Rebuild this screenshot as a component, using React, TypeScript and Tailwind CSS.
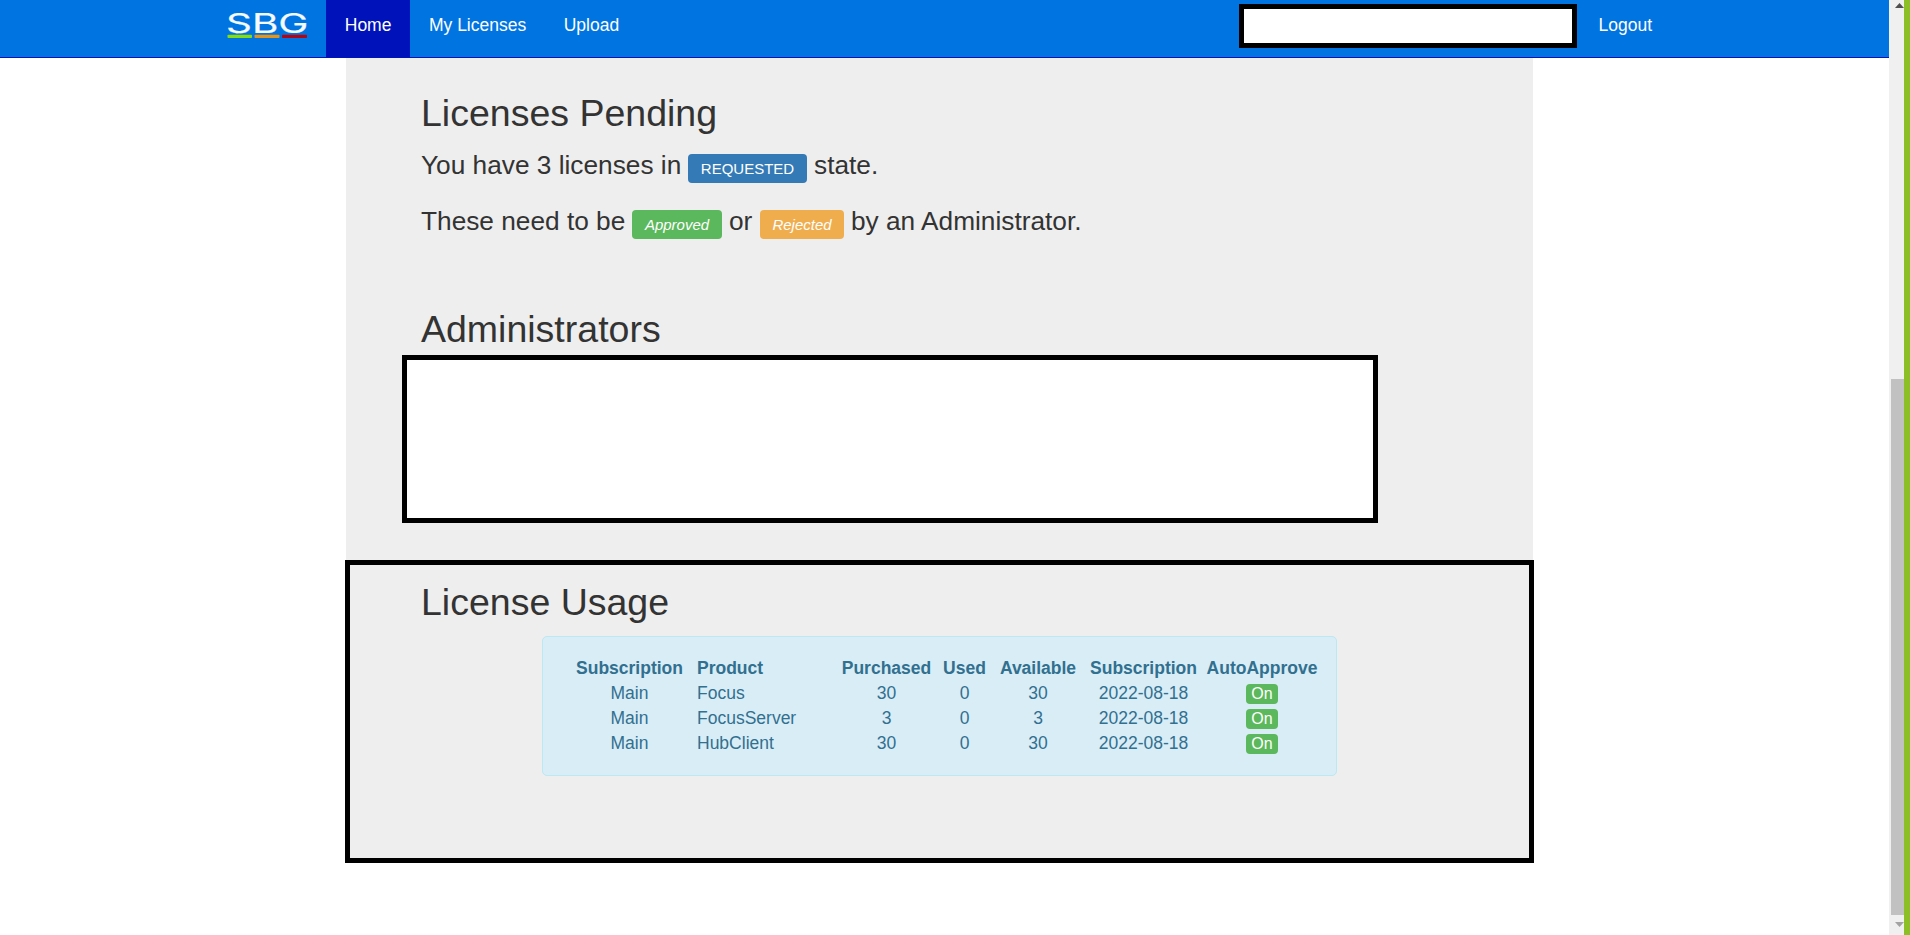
import React from "react";

const links = [
  { name: "Home", active: true },
  { name: "My Licenses", active: false },
  { name: "Upload", active: false },
];

const licenses = [
  { subscription: "Main", product: "Focus", purchased: 30, used: 0, available: 30, expires: "2022-08-18" },
  { subscription: "Main", product: "FocusServer", purchased: 3, used: 0, available: 3, expires: "2022-08-18" },
  { subscription: "Main", product: "HubClient", purchased: 30, used: 0, available: 30, expires: "2022-08-18" },
];

const Logo = () => (
  <svg
    width="81"
    height="28"
    viewBox="0 0 81 28"
    className="mt-3 mr-[18px] ml-[227px] shrink-0 overflow-visible"
  >
    <text
      x="-1"
      y="20.5"
      fill="#f4faff"
      stroke="#f4faff"
      strokeWidth="0.2"
      fontFamily="Inter, sans-serif"
      fontSize="27"
      fontWeight="400"
      textLength="82.5"
      lengthAdjust="spacingAndGlyphs"
    >
      SBG
    </text>
    <rect x="0.5" y="22.8" width="24.5" height="3.2" rx="0.8" fill="#86dc0c" />
    <rect x="27.5" y="22.8" width="25" height="3.2" rx="0.8" fill="#e5941a" />
    <rect x="55" y="22.8" width="25" height="3.2" rx="0.8" fill="#b00614" />
  </svg>
);

const Navbar = () => (
  <nav className="flex h-[58px] shrink-0 border-b border-[#0013ba] bg-[#0074e1] text-[17.5px] leading-6 text-white">
    <Logo />
    {links.map((link) => (
      <a
        key={link.name}
        className={
          link.active
            ? "bg-[#0013ba] px-[18.75px] pt-[13px]"
            : "px-[18.75px] pt-[13px]"
        }
      >
        {link.name}
      </a>
    ))}
    <div className="mt-1 mr-[21px] ml-auto h-11 w-[338px] border-5 border-black bg-white" />
    <a className="mr-[235px] w-[56px] pt-[13px] pl-[0.5px]">Logout</a>
  </nav>
);

const Scrollbar = () => (
  <div className="flex w-[15px] shrink-0 flex-col items-end bg-[#f0f0f0]">
    <svg width="9" height="5" viewBox="0 0 9 5" className="mt-[3px] shrink-0">
      <path d="M4.5 0 9 5H0z" fill="#505050" />
    </svg>
    <div className="mt-[371px] h-[536px] w-[13px] bg-[#c1c1c1]" />
    <svg width="9" height="5" viewBox="0 0 9 5" className="mt-[7px] shrink-0">
      <path d="M0 0h9L4.5 5z" fill="#a3a3a3" />
    </svg>
  </div>
);

const UsageTable = () => (
  <div className="mt-[13px] ml-[192px] h-[140px] w-[795px] rounded-[5px] border border-[#bce8f1] bg-[#d9edf7] pt-[19px] pl-[26px] text-[#31708f]">
    <table className="w-[755px] table-fixed text-center text-[17.5px] leading-[25px]">
      <colgroup>
        <col className="w-[121px]" />
        <col className="w-[143px]" />
        <col className="w-[107px]" />
        <col className="w-[49px]" />
        <col className="w-[98px]" />
        <col className="w-[113px]" />
        <col className="w-[124px]" />
      </colgroup>
      <thead>
        <tr className="h-[25px]">
          <th className="p-0">Subscription</th>
          <th className="p-0 pl-[7px] text-left">Product</th>
          <th className="p-0">Purchased</th>
          <th className="p-0">Used</th>
          <th className="p-0">Available</th>
          <th className="p-0">Subscription</th>
          <th className="p-0">AutoApprove</th>
        </tr>
      </thead>
      <tbody>
        {licenses.map((license) => (
          <tr key={license.product} className="h-[25px]">
            <td className="p-0">{license.subscription}</td>
            <td className="p-0 pl-[7px] text-left">{license.product}</td>
            <td className="p-0">{license.purchased}</td>
            <td className="p-0">{license.used}</td>
            <td className="p-0">{license.available}</td>
            <td className="p-0">{license.expires}</td>
            <td className="p-0">
              <span className="mx-auto block h-5 w-8 rounded-[4px] bg-[#5cb85c] text-base leading-5 text-white">
                On
              </span>
            </td>
          </tr>
        ))}
      </tbody>
    </table>
  </div>
);

const App = () => {
  return (
    <div className="flex h-[935px] w-[1910px] overflow-hidden bg-white font-['Liberation_Sans',Arial,sans-serif] text-[#333]">
      <div className="flex w-[1889px] flex-col">
        <Navbar />
        <main className="ml-[346px] h-[502px] w-[1187px] bg-[#eee] pl-[75px]">
          <h2 className="pt-[34px] text-[37.5px] leading-[42px]">Licenses Pending</h2>
          <div className="mt-3 flex h-[37px] text-[26.25px] leading-[38px] whitespace-nowrap">
            <span className="w-[267px]">You have 3 licenses in</span>
            <span className="mt-2 mr-[7px] h-[29px] w-[119px] rounded-[4px] bg-[#337ab7] text-center text-[15px] leading-[29px] text-white">
              REQUESTED
            </span>
            <span>state.</span>
          </div>
          <div className="mt-[19px] flex h-[37px] text-[26.25px] leading-[38px] whitespace-nowrap">
            <span className="w-[211px]">These need to be</span>
            <span className="mt-2 mr-[7px] h-[29px] w-[90px] rounded-[4px] bg-[#5cb85c] text-center text-[15px] leading-[29px] text-white italic">
              Approved
            </span>
            <span className="w-[31px]">or</span>
            <span className="mt-2 mr-[7px] h-[29px] w-[84px] rounded-[4px] bg-[#f0ad4e] text-center text-[15px] leading-[29px] text-white italic">
              Rejected
            </span>
            <span>by an Administrator.</span>
          </div>
          <h2 className="mt-[69px] text-[37.5px] leading-[42px]">Administrators</h2>
          <div className="mt-[5px] -ml-[19px] h-[168px] w-[976px] border-5 border-black bg-white" />
        </main>
        <section className="ml-[345px] h-[303px] w-[1189px] border-5 border-black bg-[#eee]">
          <h2 className="pt-4 pl-[71px] text-[37.5px] leading-[42px]">License Usage</h2>
          <UsageTable />
        </section>
      </div>
      <Scrollbar />
      <div className="w-[6px] shrink-0 bg-[#8cbf26]" />
    </div>
  );
};

export default App;
